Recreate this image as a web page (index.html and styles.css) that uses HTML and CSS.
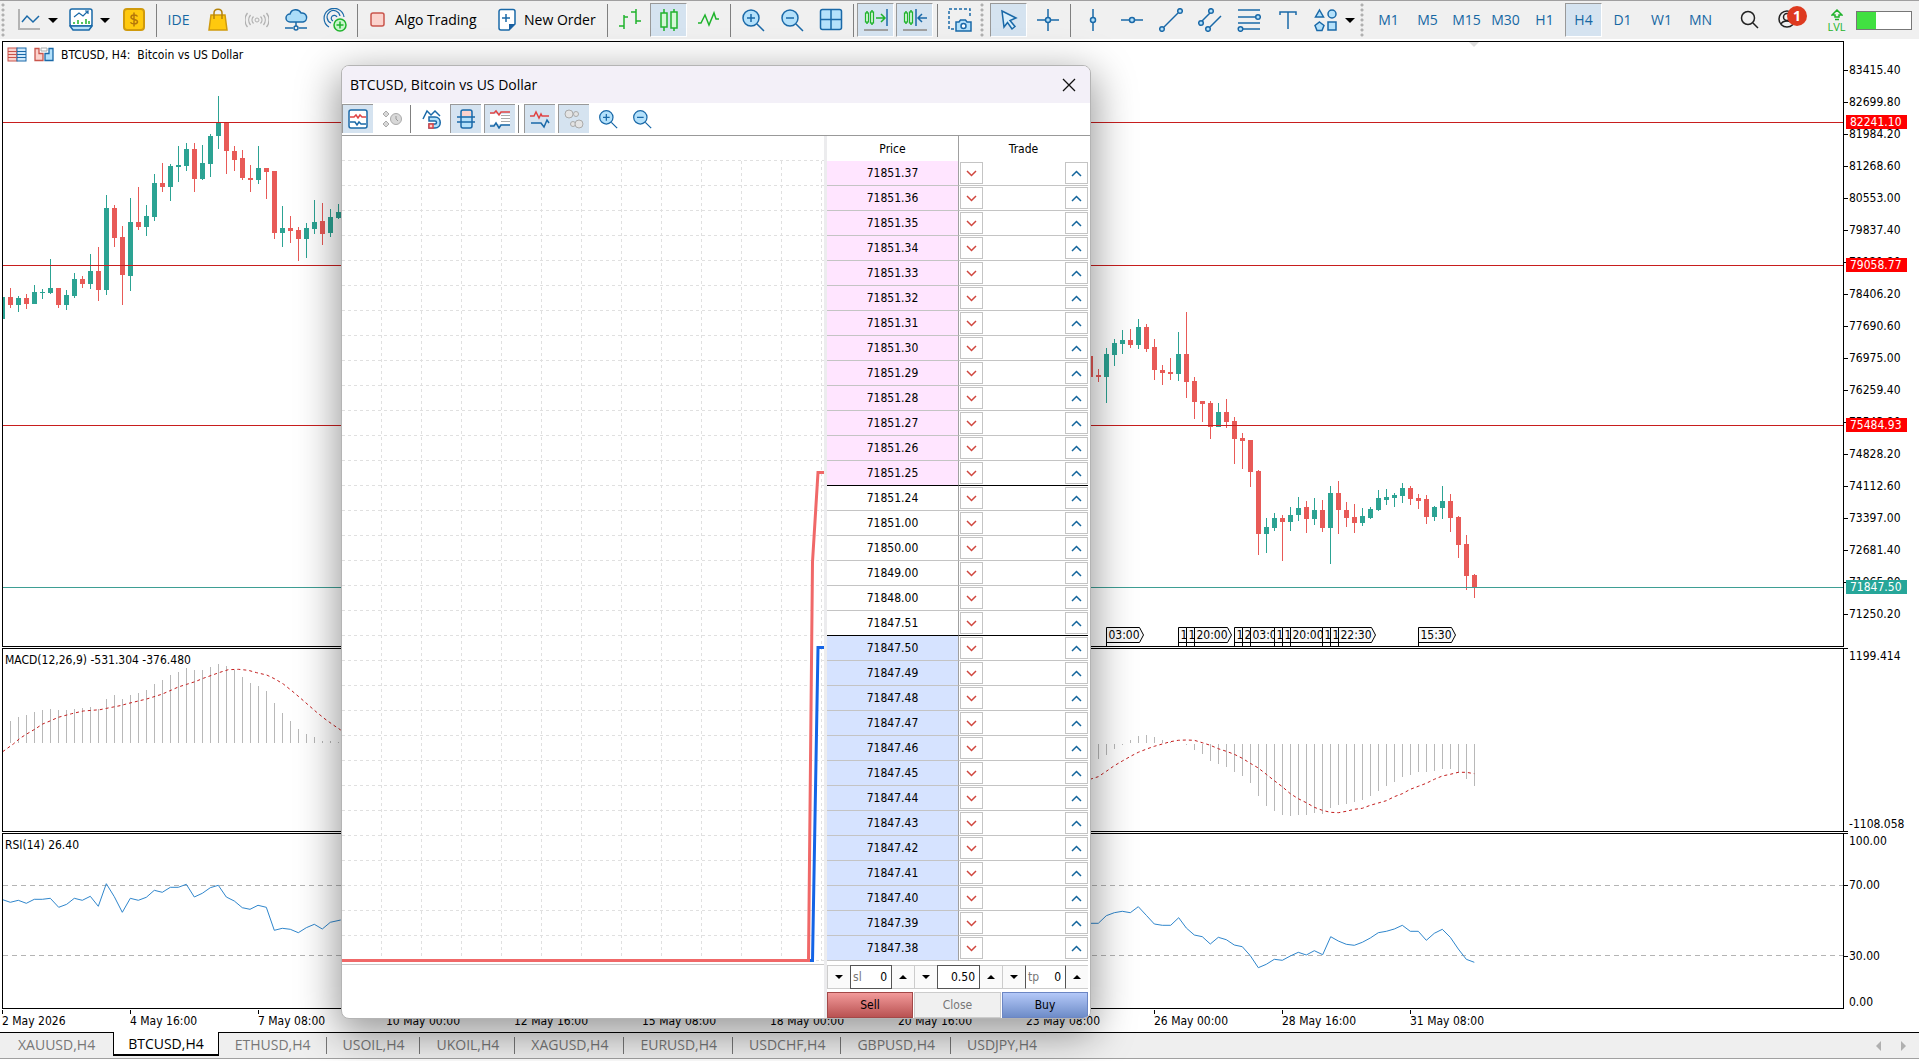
FILE: index.html
```html
<!DOCTYPE html>
<html lang="en">
<head>
<meta charset="utf-8">
<title>BTCUSD, H4</title>
<link rel="stylesheet" href="styles.css">
</head>
<body>
<svg class="sprite" aria-hidden="true">
  <symbol id="i-line" viewBox="0 0 24 24"><path d="M2 1v20h21" stroke="#b4b4b4" stroke-width="2"/><path d="M5 14l5-6 6 6 6-6" class="b"/></symbol>
  <symbol id="i-indicators" viewBox="0 0 24 24"><rect x="1" y="1" width="22" height="17" rx="2" class="b" fill="#fff"/><path d="M5 9l5-4 4 3 5-5h-3m3 0v3" class="b thin"/><path d="M5 16v-2m4 2v-4m4 4v-2m4 2v-5m3 5v-3" class="g"/><path d="M1 18h22l-3 4H4z" fill="#b9e0f8" class="b"/></symbol>
  <symbol id="i-dollar" viewBox="0 0 24 24"><rect x="2" y="1" width="20" height="21" rx="3" fill="#ffc90e" stroke="#d09a0c" stroke-width="2"/><path d="M15.500 8.500c-1-2-6.500-2-6.500.7 0 3 6.500 1.500 6.500 4.500 0 2.800-6 2.800-7 .5M12 4.500v14" stroke="#b5770a" stroke-width="1.500"/></symbol>
  <symbol id="i-bag" viewBox="0 0 24 24"><path d="M5 7h14l2 15H3z" fill="#ffc90e" stroke="#d09a0c" stroke-width="1.500"/><path d="M8 11V5c0-5 8-5 8 0v6" stroke="#b5830a" stroke-width="1.500"/></symbol>
  <symbol id="i-signal" viewBox="0 0 24 24"><circle cx="12" cy="12" r="2" stroke="#b0b0b0"/><path d="M8.500 8.500a5 5 0 0 0 0 7M15.500 8.500a5 5 0 0 1 0 7M5.500 7a8 8 0 0 0 0 10M18.500 7a8 8 0 0 1 0 10M2.500 5a11 11 0 0 0 0 14M21.500 5a11 11 0 0 1 0 14" stroke="#b0b0b0" stroke-width="1.300"/></symbol>
  <symbol id="i-cloud" viewBox="0 0 24 24"><path d="M6 14a4 4 0 0 1 0-8 6 6 0 0 1 11-1 4.500 4.500 0 0 1 2 9z" fill="#aadcf8" class="b"/><path d="M12 14v4M1 20h8m6 0h8" class="b"/><circle cx="12" cy="20" r="2" class="b"/></symbol>
  <symbol id="i-vps" viewBox="0 0 24 24"><path d="M6 19A10 10 0 1 1 21 9M8 15a6.500 6.500 0 1 1 9-7M10 13a3 3 0 1 1 4-4" class="b thin"/><circle cx="17" cy="17" r="6" fill="#c8f5cc" class="g"/><path d="M17 13.500v7M13.500 17h7" class="g"/></symbol>
  <symbol id="i-stop" viewBox="0 0 24 24"><rect x="5" y="5" width="13" height="13" rx="2" fill="#fbd3cd" stroke="#c9554c" stroke-width="1.500"/></symbol>
  <symbol id="i-doc" viewBox="0 0 24 24"><path d="M6 1.500h12a2 2 0 0 1 2 2V16l-6 6H6a2 2 0 0 1-2-2V3.500a2 2 0 0 1 2-2z" fill="#fff" class="b"/><path d="M20 16h-6v6z" fill="#1a5fa0"/><path d="M11 6v8M7 10h8" class="b"/></symbol>
  <symbol id="i-bars" viewBox="0 0 24 24"><path d="M1 18h5M6 7v14M6 9h4M13 4h5M18 1v15M18 13h5" class="g"/></symbol>
  <symbol id="i-candles" viewBox="0 0 24 24"><path d="M7 1v22M17 1v22" class="g"/><rect x="4" y="5" width="6" height="14" fill="#d4f7d6" class="g"/><rect x="14" y="4" width="6" height="16" fill="#d4f7d6" class="g"/></symbol>
  <symbol id="i-zigzag" viewBox="0 0 24 24"><path d="M2 15h3l4-8 4 10 5-12 2 6h3" class="g"/></symbol>
  <symbol id="i-zoomin" viewBox="0 0 24 24"><circle cx="10" cy="10" r="8" fill="#b4e1fb" class="b"/><path d="M16 16l7 7M10 6v8M6 10h8" class="b"/></symbol>
  <symbol id="i-zoomout" viewBox="0 0 24 24"><circle cx="10" cy="10" r="8" fill="#b4e1fb" class="b"/><path d="M16 16l7 7M6 10h8" class="b"/></symbol>
  <symbol id="i-grid" viewBox="0 0 24 24"><rect x="1.500" y="1.500" width="21" height="20" rx="2" fill="#b4e1fb" class="b"/><path d="M12 2v20M2 11.500h20" class="b"/></symbol>
  <symbol id="i-autoscroll" viewBox="0 0 24 24"><path d="M3 3v13M8 2v15" class="g"/><rect x="1.500" y="5" width="3" height="9" fill="#d4f7d6" class="g thin"/><rect x="6.500" y="4" width="3" height="11" fill="#d4f7d6" class="g thin"/><path d="M12 10h8m-3-4l4 4-4 4" class="g"/><path d="M23 1v17" class="b"/><path d="M0 22h24" stroke="#a0a0a0" stroke-width="2"/></symbol>
  <symbol id="i-shift" viewBox="0 0 24 24"><path d="M3 3v13M8 2v15" class="g"/><rect x="1.500" y="5" width="3" height="9" fill="#d4f7d6" class="g thin"/><rect x="6.500" y="4" width="3" height="11" fill="#d4f7d6" class="g thin"/><path d="M13 1v17M24 10h-8m3-4l-4 4 4 4" class="b"/><path d="M0 22h24" stroke="#a0a0a0" stroke-width="2"/></symbol>
  <symbol id="i-camera" viewBox="0 0 24 24"><path d="M6 21H1V1h21v8" class="b" stroke-dasharray="3 2"/><path d="M8 14h3l1.500-2h5l1.500 2h4v9H8z" fill="#b4e1fb" class="b"/><circle cx="15.500" cy="18" r="2.500" fill="#fff" class="b"/></symbol>
  <symbol id="i-cursor" viewBox="0 0 24 24"><path d="M5 3l14 7-6 2.500 5 6-3 2.500-4.500-6.500L7 19z" fill="#d9effc" class="b"/></symbol>
  <symbol id="i-cross" viewBox="0 0 24 24"><path d="M12 1v8m0 6v8M1 12h8m6 0h8" class="b"/><circle cx="12" cy="12" r="2.500" fill="#b4e1fb" class="b"/></symbol>
  <symbol id="i-vline" viewBox="0 0 24 24"><path d="M12 1v8m0 6v8" class="b"/><circle cx="12" cy="12" r="2.500" fill="#b4e1fb" class="b"/></symbol>
  <symbol id="i-hline" viewBox="0 0 24 24"><path d="M1 12h8m6 0h8" class="b"/><circle cx="12" cy="12" r="2.500" fill="#b4e1fb" class="b"/></symbol>
  <symbol id="i-trend" viewBox="0 0 24 24"><path d="M5 19L19 5" class="b"/><circle cx="3" cy="21" r="2.300" fill="#b4e1fb" class="b"/><circle cx="21" cy="3" r="2.300" fill="#b4e1fb" class="b"/></symbol>
  <symbol id="i-channel" viewBox="0 0 24 24"><path d="M4 13l8-8M12 19L23 8" class="b"/><circle cx="3" cy="15" r="2.300" fill="#b4e1fb" class="b"/><circle cx="13" cy="3" r="2.300" fill="#b4e1fb" class="b"/><circle cx="10" cy="21" r="2.300" fill="#b4e1fb" class="b"/></symbol>
  <symbol id="i-fib" viewBox="0 0 24 24"><path d="M1 2h22M1 9h17M1 15h22M6 21h17" class="b"/><circle cx="21" cy="9" r="2.300" fill="#b4e1fb" class="b"/><circle cx="3.500" cy="21" r="2.300" fill="#b4e1fb" class="b"/></symbol>
  <symbol id="i-text" viewBox="0 0 24 24"><path d="M4 7V4h16v3M12 4v17" class="b"/></symbol>
  <symbol id="i-shapes" viewBox="0 0 24 24"><path d="M5.500 2l4 7h-8zM5.500 14l4.500 3.500-2 5H3L1 17.500z" fill="#b4e1fb" class="b"/><circle cx="18" cy="6" r="4" fill="#b4e1fb" class="b"/><rect x="14" y="14" width="8" height="8" fill="#b4e1fb" class="b"/></symbol>
  <symbol id="i-search" viewBox="0 0 24 24"><circle cx="11" cy="10" r="6.500" stroke="#222" stroke-width="1.500"/><path d="M16 15l5 5" stroke="#222" stroke-width="1.500"/></symbol>
  <symbol id="i-user" viewBox="0 0 24 24"><g stroke="#222" stroke-width="1.500"><circle cx="11" cy="11" r="8"/><circle cx="11" cy="9" r="3.500"/><path d="M5 16c2-4 10-4 12 0"/></g></symbol>
  <symbol id="i-level" viewBox="6 0 12 12"><path d="M12 1l5 5h-3v2h-4V6H7zM10 10.500h4" class="g"/></symbol>
  <symbol id="i-table" viewBox="0 0 20 16"><rect x="1" y="1" width="9" height="13" fill="#fbd3cd" stroke="#c9554c"/><rect x="10" y="1" width="9" height="13" fill="#cfe9fb" stroke="#1a69a8"/><path d="M1 4.500h9M1 7.500h9M1 10.500h9" stroke="#c9554c"/><path d="M10 4.500h9M10 7.500h9M10 10.500h9" stroke="#1a69a8"/></symbol>
  <symbol id="i-depth" viewBox="0 0 20 16"><path d="M1 1.500h4v5h4v7H1z" fill="#fbd3cd" stroke="#c9554c" stroke-width="1.300"/><path d="M19 1.500h-4v5h-4v7h8z" fill="#b4e1fb" stroke="#1a69a8" stroke-width="1.300"/><path d="M7 1h6v3H7z" fill="#fff" stroke="#aaa"/></symbol>
  <symbol id="d-chart" viewBox="0 0 20 20"><rect x="1" y="1" width="18" height="18" rx="2" fill="#fff" class="b"/><path d="M2 8h4l2-2 2 3 2-3 2 2h4" class="r"/><path d="M2 13h5l2 3 2-3 2 2h5" class="b"/></symbol>
  <symbol id="d-history" viewBox="0 0 20 20"><g fill="#d8d8d8" stroke="#aaa"><path d="M4 2l3 3-3 3-3-3zM4 12l3 3-3 3-3-3z"/><circle cx="14" cy="10" r="5.500"/></g><path d="M14 7v3l2 2" stroke="#999"/></symbol>
  <symbol id="d-magnet" viewBox="0 0 20 20"><path d="M1 10l4-8 4 4 4-4 5 5" class="b"/><path d="M7 8h6c7 0 7 11 0 11H7v-4h6c2 0 2-3 0-3H7z" fill="#b4e1fb" class="b"/><path d="M7 15h4v4H7z" fill="#fbd3cd" class="r"/></symbol>
  <symbol id="d-spread" viewBox="0 0 20 20"><rect x="5" y="1" width="11" height="18" rx="2" fill="#b4e1fb" class="b"/><path d="M6 2h9v5H6z" fill="#fbd3cd"/><path d="M1 8h18M1 13h18" class="b"/></symbol>
  <symbol id="d-volume" viewBox="0 0 20 20"><path d="M0 5h20v10H0z" fill="#fff"/><path d="M0 4h4l2-2 3 4 2-3h9" class="r"/><path d="M0 17h4l2-3 3 5 2-3h9" class="b"/><path d="M11 6.500h9M11 9.500h9M11 12.500h9" stroke="#aaa"/></symbol>
  <symbol id="d-ticks" viewBox="0 0 20 20"><path d="M0 7h4l2-4 3 6 2-4 1 2h7" class="r"/><path d="M1 14h10l3 4 3-7 2 3" class="b"/></symbol>
  <symbol id="d-deals" viewBox="0 0 20 20"><g stroke="#aaa" fill="#e4e4e4"><circle cx="5" cy="5" r="4"/><circle cx="12" cy="5" r="2.500"/><circle cx="9" cy="15" r="2.500"/><circle cx="15" cy="15" r="4"/></g></symbol>
</svg>

<header class="toolbar" role="toolbar" aria-label="Standard">
  <span class="grip"></span>
  <button class="tool drop" aria-label="Line studies"><svg><use href="#i-line"/></svg><i></i></button>
  <button class="tool drop" aria-label="Indicators"><svg><use href="#i-indicators"/></svg><i></i></button>
  <button class="tool" aria-label="Quotes"><svg><use href="#i-dollar"/></svg></button>
  <span class="sep"></span>
  <button class="tool text">IDE</button>
  <button class="tool" aria-label="Market"><svg><use href="#i-bag"/></svg></button>
  <button class="tool" aria-label="Signals"><svg><use href="#i-signal"/></svg></button>
  <button class="tool" aria-label="Cloud"><svg><use href="#i-cloud"/></svg></button>
  <button class="tool" aria-label="Hosting"><svg><use href="#i-vps"/></svg></button>
  <span class="sep"></span>
  <button class="tool wide algo"><svg><use href="#i-stop"/></svg>Algo Trading</button>
  <button class="tool wide"><svg><use href="#i-doc"/></svg>New Order</button>
  <span class="sep"></span>
  <button class="tool" aria-label="Bar chart"><svg><use href="#i-bars"/></svg></button>
  <button class="tool on" aria-label="Candlesticks"><svg><use href="#i-candles"/></svg></button>
  <button class="tool" aria-label="Line chart"><svg><use href="#i-zigzag"/></svg></button>
  <span class="sep"></span>
  <button class="tool" aria-label="Zoom in"><svg><use href="#i-zoomin"/></svg></button>
  <button class="tool" aria-label="Zoom out"><svg><use href="#i-zoomout"/></svg></button>
  <button class="tool" aria-label="Tile windows"><svg><use href="#i-grid"/></svg></button>
  <span class="sep"></span>
  <button class="tool on" aria-label="Auto scroll"><svg><use href="#i-autoscroll"/></svg></button>
  <button class="tool on" aria-label="Chart shift"><svg><use href="#i-shift"/></svg></button>
  <span class="sep"></span>
  <button class="tool" aria-label="Screenshot"><svg><use href="#i-camera"/></svg></button>
  <span class="grip"></span>
  <button class="tool on" aria-label="Cursor"><svg><use href="#i-cursor"/></svg></button>
  <button class="tool" aria-label="Crosshair"><svg><use href="#i-cross"/></svg></button>
  <span class="sep"></span>
  <button class="tool" aria-label="Vertical line"><svg><use href="#i-vline"/></svg></button>
  <button class="tool" aria-label="Horizontal line"><svg><use href="#i-hline"/></svg></button>
  <button class="tool" aria-label="Trendline"><svg><use href="#i-trend"/></svg></button>
  <button class="tool" aria-label="Channel"><svg><use href="#i-channel"/></svg></button>
  <button class="tool" aria-label="Fibonacci"><svg><use href="#i-fib"/></svg></button>
  <button class="tool" aria-label="Text"><svg><use href="#i-text"/></svg></button>
  <button class="tool drop" aria-label="Shapes"><svg><use href="#i-shapes"/></svg><i></i></button>
  <span class="grip"></span>
  <button class="tool text">M1</button>
  <button class="tool text">M5</button>
  <button class="tool text">M15</button>
  <button class="tool text">M30</button>
  <button class="tool text">H1</button>
  <button class="tool text on">H4</button>
  <button class="tool text">D1</button>
  <button class="tool text">W1</button>
  <button class="tool text">MN</button>
  <div class="status">
    <button class="tool" aria-label="Search"><svg><use href="#i-search"/></svg></button>
    <button class="tool" aria-label="Account"><svg><use href="#i-user"/></svg><b class="badge">1</b></button>
    <button class="tool level"><svg><use href="#i-level"/></svg><span>LVL</span></button>
    <span class="battery"><span></span></span>
  </div>
</header>

<main class="workspace">
  <section class="panes">
    <div class="plot">
      <svg id="price"></svg>
      <h1 class="caption"><svg><use href="#i-table"/></svg><svg><use href="#i-depth"/></svg><span>BTCUSD, H4:&nbsp; Bitcoin vs US Dollar</span></h1>
    </div>
    <div class="axis prices">
      <span>83415.40</span><span>82699.80</span><span>81984.20</span><span>81268.60</span><span>80553.00</span><span>79837.40</span><span>79121.80</span><span>78406.20</span><span>77690.60</span><span>76975.00</span><span>76259.40</span><span>75543.80</span><span>74828.20</span><span>74112.60</span><span>73397.00</span><span>72681.40</span><span>71965.80</span><span>71250.20</span>
      <b class="tag r1">82241.10</b><b class="tag r2">79058.77</b><b class="tag r3">75484.93</b><b class="tag bid">71847.50</b>
    </div>
    <div class="plot"><svg id="macd"></svg><h2 class="caption">MACD(12,26,9) -531.304 -376.480</h2></div>
    <div class="axis ends"><span>1199.414</span><span>-1108.058</span></div>
    <div class="plot"><svg id="rsi"></svg><h2 class="caption">RSI(14) 26.40</h2></div>
    <div class="axis levels"><span>100.00</span><span class="tick">70.00</span><span class="tick">30.00</span><span>0.00</span></div>
    <div class="dates">
      <span>2 May 2026</span><span>4 May 16:00</span><span>7 May 08:00</span><span>10 May 00:00</span><span>12 May 16:00</span><span>15 May 08:00</span><span>18 May 00:00</span><span>20 May 16:00</span><span>23 May 08:00</span><span>26 May 00:00</span><span>28 May 16:00</span><span>31 May 08:00</span>
    </div>
  </section>
  <nav class="tabs" aria-label="Charts">
    <a href="#">XAUUSD,H4</a><a href="#" class="current">BTCUSD,H4</a><a href="#">ETHUSD,H4</a><a href="#">USOIL,H4</a><a href="#">UKOIL,H4</a><a href="#">XAGUSD,H4</a><a href="#">EURUSD,H4</a><a href="#">USDCHF,H4</a><a href="#">GBPUSD,H4</a><a href="#" class="last">USDJPY,H4</a>
    <span class="scroll"><button class="prev" aria-label="Previous"></button><button class="next" aria-label="Next"></button></span>
  </nav>
</main>

<section class="dialog" role="dialog" aria-label="Depth of market">
  <header class="title"><h2>BTCUSD, Bitcoin vs US Dollar</h2><button aria-label="Close window"><svg viewBox="0 0 14 14"><path d="M1 1l12 12M13 1L1 13" stroke="#111" stroke-width="1.300"/></svg></button></header>
  <div class="dom-tools">
    <button class="on" aria-label="Chart"><svg><use href="#d-chart"/></svg></button>
    <button aria-label="History"><svg><use href="#d-history"/></svg></button>
    <span class="sep"></span>
    <button aria-label="Magnet"><svg><use href="#d-magnet"/></svg></button>
    <button class="on" aria-label="Spread"><svg><use href="#d-spread"/></svg></button>
    <button class="on" aria-label="Volumes"><svg><use href="#d-volume"/></svg></button>
    <span class="sep"></span>
    <button class="on" aria-label="Ticks"><svg><use href="#d-ticks"/></svg></button>
    <button class="on" aria-label="Deals"><svg><use href="#d-deals"/></svg></button>
    <button aria-label="Zoom in"><svg><use href="#i-zoomin"/></svg></button>
    <button aria-label="Zoom out"><svg><use href="#i-zoomout"/></svg></button>
  </div>
  <div class="dom">
    <div class="depth"><svg id="depth"></svg></div>
    <div class="book">
      <table>
        <thead><tr><th class="price">Price</th><th colspan="3">Trade</th></tr></thead>
        <tbody id="ladder"></tbody>
      </table>
      <form class="order">
        <div class="spin"><button type="button" aria-label="Lower stop loss" class="down"></button><label class="field"><span>sl</span><input value="0"></label><button type="button" aria-label="Raise stop loss" class="up"></button></div>
        <div class="spin"><button type="button" aria-label="Lower volume" class="down"></button><label class="field"><input value="0.50" aria-label="Volume"></label><button type="button" aria-label="Raise volume" class="up"></button></div>
        <div class="spin"><button type="button" aria-label="Lower take profit" class="down"></button><label class="field side"><span>tp</span><input value="0"></label><button type="button" aria-label="Raise take profit" class="up"></button></div>
        <button type="button" class="deal sell">Sell</button>
        <button type="button" class="deal close">Close</button>
        <button type="button" class="deal buy">Buy</button>
      </form>
    </div>
  </div>
</section>
<script src="chart.js"></script>
</body>
</html>
```
FILE: styles.css
```css
* { box-sizing: border-box; }
body {
  margin: 0;
  height: 100vh;
  display: flex;
  flex-direction: column;
  overflow: hidden;
  background: #fff;
  color: #000;
  font: 12px/14px "DejaVu Sans Condensed", "DejaVu Sans", sans-serif;
}
button, input { font: inherit; color: inherit; padding: 0; margin: 0; border: 0; background: none; }
h1, h2 { margin: 0; font: inherit; }
svg { fill: none; }
.sprite { position: absolute; width: 0; height: 0; }
.b { stroke: #1a69a8; stroke-width: 1.5; }
.g { stroke: #1fb32c; stroke-width: 1.5; }
.r { stroke: #e04444; stroke-width: 1.5; }
.thin { stroke-width: 1.2; }

/* main toolbar */
.toolbar {
  flex: none;
  height: 39px;
  display: flex;
  align-items: center;
  padding-right: 7px;
  background: #f0f0f0;
  border-top: 1px solid #a09fa0;
  font: 14px/20px "Open Sans", "Noto Sans", sans-serif;
}
.toolbar svg { flex: none; width: 24px; height: 24px; }
.grip { flex: none; width: 10px; height: 34px; background: radial-gradient(circle at 3px 2px, #b0b0b0 1px, transparent 2px) 0 0 / 10px 5px; }
.sep { flex: none; width: 1px; height: 33px; margin: 0 2px 0 3px; background: #808080; }
.tool {
  flex: none;
  position: relative;
  width: 37px;
  height: 34px;
  margin: 0 1px;
  display: flex;
  align-items: center;
  justify-content: center;
  border: 1px solid transparent;
}
.tool.on { background: #d5e3f0; border-color: #999 #fff #fff #999; }
.tool.text { color: #1667a3; }
.tool.drop { width: 50px; justify-content: space-between; padding: 0 2px 0 5px; }
.tool.drop i { border: 5px solid transparent; border-top-color: #000; border-bottom: 0; }
.tool.wide { width: 113px; justify-content: flex-start; padding-left: 4px; gap: 5px; white-space: nowrap; }
.tool.algo { width: 127px; }
.status { margin-left: auto; display: flex; align-items: center; }
.badge {
  position: absolute;
  top: 2px;
  right: -2px;
  width: 20px;
  border-radius: 10px;
  background: #de3a20;
  color: #fff;
  text-align: center;
}
.level { flex-direction: column; gap: 1px; color: #1fb32c; font-size: 11px; line-height: 10px; margin-left: 11px; }
.toolbar .level svg { width: 12px; height: 12px; }
.battery { width: 56px; height: 19px; border: 1px solid #777; background: #fff; }
.battery span { display: block; width: 35%; height: 100%; background: #41e041; }

/* chart panes */
.workspace { flex: 1; display: flex; flex-direction: column; min-height: 0; padding-top: 2px; }
.panes {
  flex: 1;
  min-height: 0;
  display: grid;
  grid-template: minmax(0, 606fr) minmax(0, 184fr) minmax(0, 176fr) 22px / minmax(0, 1fr) 75px;
  row-gap: 1px;
  padding-left: 2px;
}
.plot { position: relative; border: 1px solid #000; overflow: hidden; }
.plot > svg { display: block; width: 100%; height: 100%; }
.caption { position: absolute; top: 4px; left: 2px; display: flex; align-items: center; background: #fff; }
h1.caption { top: 5px; left: 4px; gap: 7px; }
.caption svg { width: 20px; height: 16px; }
.axis { position: relative; padding-left: 5px; overflow: hidden; }
.axis span { display: block; position: relative; }
.prices { padding-top: 13px; }
.prices span { height: 32px; line-height: 32px; }
.prices span::before, .tick::before { content: ""; position: absolute; left: -5px; top: 50%; width: 4px; border-top: 1px solid #000; }
.tag { position: absolute; left: 2px; width: 61px; height: 14px; padding-left: 4px; color: #fff; font-weight: normal; background: #f00; }
.r1 { top: 74px; }
.r2 { top: 217px; }
.r3 { top: 377px; }
.bid { top: 539px; background: #26a699; }
.ends { display: flex; flex-direction: column; justify-content: space-between; }
.ends span:first-child::before, .ends span:last-child::after, .levels span:first-child::before {
  content: "";
  display: block;
  width: 4px;
  margin-left: -5px;
  border-top: 1px solid #000;
}
.levels { display: grid; grid-template-rows: 45fr 70fr 46fr 14px; align-items: start; }
.dates { grid-column: 1 / -1; display: flex; overflow: hidden; }
.dates span { flex: none; width: 128px; padding-top: 4px; background: linear-gradient(#000, #000) 0 0 / 1px 4px no-repeat; white-space: nowrap; }

/* chart drawing */
.up { stroke: #2ca393; }
.dn { stroke: #e85a57; }
.body { stroke-width: 5; }
.level-line { stroke: #c81e1e; }
.bid-line { stroke: #3e9e94; }
.bars { stroke: #b8b8b8; }
.signal { stroke: #c41e1e; stroke-dasharray: 3 3; stroke-width: 1; }
.rsi { stroke: #2f86cc; }
.guide { stroke: #b4b4b4; stroke-dasharray: 5 4; }
.flag { fill: #f8f8f8; stroke: #000; }
.flag-text { fill: #000; }
.mesh { stroke: #e0e0e0; stroke-dasharray: 3 3; }
.asks { stroke: #f06868; stroke-width: 3; }
.bids { stroke: #1464e6; stroke-width: 3; }

/* chart tabs */
.tabs {
  flex: none;
  display: flex;
  height: 27px;
  margin-bottom: 2px;
  border-top: 1px solid #000;
  border-bottom: 1px solid #a0a0a0;
  background: #efefef;
  font: 14px/24px "Open Sans", "Noto Sans", sans-serif;
}
.tabs a { padding: 0 16px; color: #777; text-decoration: none; background: linear-gradient(#777, #777) 100% 4px / 1px 17px no-repeat; }
.tabs a:first-child { padding: 0 18px; background: none; }
.tabs a.last { background: none; }
.tabs a.current { height: 24px; margin-top: -1px; padding: 0 14px; border: solid #000; border-width: 0 1px 2px; background: #fff; color: #000; }
.scroll { margin-left: auto; display: flex; align-items: center; gap: 20px; padding-right: 13px; }
.prev, .next { border: 5px solid transparent; }
.prev { border-left: 0; border-right-color: #b0b0b0; }
.next { border-right: 0; border-left-color: #b0b0b0; }

/* depth of market window */
.dialog {
  position: absolute;
  left: 341px;
  top: 65px;
  width: 750px;
  border: 1px solid #b4b4b4;
  border-radius: 8px;
  overflow: hidden;
  background: #fff;
  box-shadow: 0 12px 40px 4px rgba(0, 0, 0, .4);
}
.title { display: flex; align-items: center; justify-content: space-between; height: 37px; padding: 0 14px 0 8px; background: #f3f0f8; font: 14px/20px "Open Sans", "Noto Sans", sans-serif; }
.title svg { display: block; width: 14px; height: 14px; }
.dom-tools { display: flex; align-items: center; gap: 3px; height: 33px; border-bottom: 1px solid #999; padding-bottom: 1px; }
.dom-tools button { display: flex; align-items: center; justify-content: center; width: 31px; height: 29px; border: solid transparent; border-width: 1px 0 0 1px; }
.dom-tools button.on { background: #d5e3f0; border-color: #999; }
.dom-tools svg { width: 20px; height: 20px; }
.dom-tools .sep { height: 28px; margin: 0 2px 0 0; }
.dom { display: flex; }
.depth { flex: 1; border-right: 3px solid #ececee; }
.depth svg { display: block; width: 100%; height: 829px; border-bottom: 1px solid #c8c8c8; }
.book { width: 263px; padding-right: 2px; background: #fff; }
table { width: 100%; border-collapse: separate; border-spacing: 0; table-layout: fixed; }
th, td { height: 25px; padding: 0; font-weight: normal; text-align: center; }
th.price { width: 132px; }
.price { border-right: 1px solid #a0a0a0; }
td { border-bottom: 1px solid #c4c4c4; }
.ask .price { background: #ffe5ff; }
.bid-row .price { background: #d6e3ff; }
.edge td { border-bottom-color: #000; }
td.act { text-align: left; padding-left: 1px; }
td.act:last-child { text-align: right; padding: 0; }
td button { display: inline-flex; align-items: center; justify-content: center; vertical-align: middle; width: 23px; height: 22px; border: 1px solid #c4c4c4; background: #fff; }
td svg { width: 11px; height: 7px; }
.sellmark { stroke: #d0463e; stroke-width: 1.5; }
.buymark { stroke: #14659c; stroke-width: 1.5; }
.order { display: grid; grid-template-columns: 87px 88px 86px; row-gap: 3px; padding: 4px 0 0; }
.spin { display: flex; height: 24px; border: solid #ccc; border-width: 1px 0 1px 1px; background: #fafafa; }
.spin button { flex: none; width: 22px; display: flex; align-items: center; justify-content: center; }
.spin button::before { content: ""; border: 4px solid transparent; }
.spin .down::before { border-top-color: #000; border-bottom: 0; }
.spin .up::before { border-bottom-color: #000; border-top: 0; }
.field { flex: 1; display: flex; align-items: center; margin: -1px 0; padding: 0 4px 0 2px; border: 1px solid #555; background: #fff; }
.field.side { border-color: #ccc #555; }
.field span { color: #777; }
.field input { flex: 1; min-width: 0; width: 20px; text-align: right; outline: 0; }
.deal { height: 26px; margin-right: 1px; border: 1px solid #ccc; background: #f0f0f0; }
.close { color: #777; }
.sell { border-color: #a34848; background: linear-gradient(#f29a9a, #b95252); }
.buy { margin: 0; border-color: #6c86c4; background: linear-gradient(#b4c8f8, #6e8cc8); }
```
FILE: chart.js
```js
const NS = 'http://www.w3.org/2000/svg';
function add(parent, name, attrs, text) {
  const el = document.createElementNS(NS, name);
  for (const key in attrs) el.setAttribute(key, attrs[key]);
  if (text) el.textContent = text;
  parent.appendChild(el);
  return el;
}
const byId = id => document.getElementById(id);

// Samples are stored at three units per pixel; bars stand eight pixels apart.
const STEP = 8;
const px = v => Math.round(v / 3);
const barX = i => i * STEP - 0.5;

// high, low, body top, body bottom, direction (1 = up)
const early = [
  [651,717,651,717,1],[624,684,651,675,0],[648,696,654,675,1],[642,687,654,672,0],[615,672,636,672,1],[627,657,635,638,1],
  [537,642,624,639,1],[624,684,624,675,0],[630,690,645,675,1],[579,654,597,648,1],[588,624,597,612,0],[522,627,573,612,1],
  [501,663,573,630,0],[345,645,384,630,1],[375,501,384,474,0],[438,675,471,585,0],[354,633,426,588,1],[321,450,426,441,0],
  [375,468,408,441,1],[282,423,309,411,1],[249,336,309,321,0],[252,363,258,321,1],[198,306,255,261,1],[189,273,207,258,1],
  [189,336,207,297,0],[195,300,249,297,1],[162,291,168,252,1],[48,207,127,168,1],[127,282,127,213,0],[198,273,213,240,0],
  [210,300,234,294,0],[255,336,294,300,0],[198,312,264,300,1],[264,357,264,276,0],[273,477,273,459,0],[378,501,444,459,1],
  [408,489,444,453,0],[441,543,450,477,0],[429,534,444,477,1],[360,462,426,447,1],[369,495,423,462,0],[387,471,411,459,1],
  [372,417,396,414,1]];
const late = [
  [165,294,167,231,0],[207,246,225,231,0],[144,309,162,231,1],[117,198,129,165,1],[90,162,120,132,1],[87,144,120,135,0],
  [57,147,81,135,1],[72,156,81,147,0],[117,240,141,210,0],[195,255,210,219,0],[174,240,216,222,0],[96,243,162,222,1],
  [36,294,162,246,0],[231,357,243,306,0],[303,366,303,312,0],[303,417,309,381,0],[309,381,336,381,1],[297,384,336,366,0],
  [351,492,363,417,0],[399,507,414,423,0],[420,561,420,516,0],[510,765,513,702,0],[654,759,681,702,1],[639,693,654,684,1],
  [645,783,654,666,0],[621,693,645,666,1],[591,663,624,645,1],[603,699,621,657,0],[594,675,630,657,1],[600,696,630,684,0],
  [558,792,579,684,1],[543,702,579,630,0],[606,681,630,654,0],[612,699,651,669,0],[624,678,648,669,1],[621,657,627,654,1],
  [570,633,594,630,1],[567,615,591,600,1],[579,621,585,594,1],[549,609,564,588,1],[558,615,564,597,0],[582,627,594,603,0],
  [585,672,597,651,0],[618,663,621,651,1],[558,657,603,624,1],[582,696,603,654,0],[648,774,651,735,0],[705,870,732,828,0],
  [822,894,825,864,0]];

function candles(svg, list, first, offset) {
  list.forEach(([hi, lo, top, bottom, up], n) => {
    const x = barX(first + n), cls = up ? 'up' : 'dn';
    add(svg, 'path', { class: cls, d: `M${x} ${offset + px(hi)}V${offset + px(lo)}` });
    add(svg, 'path', { class: cls + ' body', d: `M${x} ${offset + px(top)}V${offset + px(bottom)}` });
  });
}
const rule = (svg, y, cls) => add(svg, 'line', { x1: 0, x2: '100%', y1: y, y2: y, class: cls });

const price = byId('price');
candles(price, early, 0, 38);
candles(price, late, 136, 258);
[80.5, 223.5, 383.5].forEach(y => rule(price, y, 'level-line'));
rule(price, 545.5, 'bid-line');
add(price, 'path', { d: 'M1466 0h10l-5 5z', fill: '#ddd' });
[[138,'03:00'],[147,'1'],[148,'1'],[149,'20:00'],[154,'1'],[155,'2'],[156,'03:00'],[159,'1'],[160,'1'],[161,'20:00'],[165,'1'],[166,'1'],[167,'22:30'],[177,'15:30']].forEach(([i, label]) => {
  const x = barX(i);
  add(price, 'path', { class: 'flag', d: `M${x} 604V585.500h33l4 7.500-4 7.500h-33` });
  add(price, 'text', { class: 'flag-text', x: x + 2, y: 597 }, label);
});

const macd = byId('macd');
const zero = 94;
[243,231,225,215,210,207,210,210,207,204,201,207,177,165,177,165,159,150,132,120,105,96,84,90,90,81,72,78,90,111,129,138,153,189,219,243,267,282,291,303,303,306]
  .forEach((v, n) => add(macd, 'path', { class: 'bars', d: `M${barX(n + 1)} ${px(v) - 9}V${zero}` }));
[430,416,404,386,374,360,348,345,351,360,366,369,374,389,402,422,432,440,455,467,488,527,557,572,584,587,584,584,578,581,563,554,551,545,539,527,512,497,485,470,464,455,455,452,446,446,458,476,497]
  .forEach((v, n) => add(macd, 'path', { class: 'bars', d: `M${barX(n + 136)} ${px(v) - 29}V${v < 371 ? zero : zero + 1}` }));

function curve(svg, cls, pts, dx, dy) {
  const d = pts.map(([x, y]) => `${(x / 3 + dx).toFixed(1)} ${(y / 3 + dy).toFixed(1)}`).join('L');
  add(svg, 'path', { class: cls, d: 'M' + d });
}
curve(macd, 'signal', [[8,335],[40,312],[60,295],[80,282],[104,268],[128,252],[150,243],[175,232],[215,221],[250,213],[300,209],[320,205],[360,197],[390,189],[440,177],[485,163],[510,152],[535,141],[560,133],[585,125],[610,115],[635,106],[660,97],[685,89],[715,88],[745,91],[770,98],[800,105],[825,117],[850,132],[875,152],[900,173],[925,195],[950,217],[975,237],[1000,255],[1022,270]], -3, -9);
curve(macd, 'signal', [[15,478],[40,470],[64,454],[88,437],[112,423],[140,407],[160,397],[185,387],[208,379],[232,372],[256,365],[280,361],[304,360],[328,361],[352,368],[376,376],[400,386],[424,394],[448,403],[472,415],[496,430],[520,444],[544,463],[568,482],[592,500],[616,521],[640,536],[664,548],[688,562],[712,571],[736,577],[760,578],[784,574],[808,568],[832,565],[856,556],[880,549],[904,542],[928,530],[952,521],[976,508],[1000,499],[1024,490],[1048,478],[1072,468],[1096,463],[1120,457],[1144,457],[1168,461]], 1082, -29);

const rsi = byId('rsi');
rule(rsi, 51.5, 'guide');
rule(rsi, 121.5, 'guide');
curve(rsi, 'rsi', [[8,779],[31,787],[55,781],[79,790],[103,778],[127,778],[151,775],[176,802],[200,793],[223,775],[247,781],[271,769],[295,799],[319,731],[343,770],[367,817],[391,775],[415,781],[439,772],[463,751],[487,757],[511,742],[535,742],[559,733],[583,771],[607,760],[631,743],[655,736],[679,771],[703,783],[727,803],[750,808],[774,796],[799,802],[823,871],[847,865],[871,868],[895,878],[919,863],[943,853],[967,867],[991,847],[1022,840]], -3, -194);
curve(rsi, 'rsi', [[15,910],[40,910],[64,887],[88,878],[112,874],[136,878],[160,860],[184,886],[208,912],[232,916],[257,916],[281,893],[304,924],[328,945],[352,950],[376,972],[400,952],[424,959],[448,975],[472,980],[496,1007],[520,1043],[544,1033],[568,1018],[592,1021],[616,1008],[640,997],[664,1005],[688,992],[713,1004],[737,950],[760,963],[784,973],[808,976],[832,967],[856,954],[880,938],[904,934],[928,927],[952,916],[976,934],[1000,934],[1024,961],[1048,940],[1072,928],[1096,952],[1120,987],[1144,1018],[1168,1027]], 1082, -214);

const depth = byId('depth');
for (let x = 39.5; x < 482; x += 40) add(depth, 'line', { class: 'mesh', x1: x, x2: x, y1: 25, y2: 825 });
for (let y = 24.5; y < 826; y += 25) rule(depth, y, 'mesh');
add(depth, 'path', { class: 'bids', d: 'M460 824.500h10.500L476 511.500h8' });
add(depth, 'path', { class: 'asks', d: 'M0 824.500h466.500L470.500 426l5.500-89.500h8' });

const asks = [], bids = [];
for (let n = 0; n < 13; n++) {
  asks.push((71851.37 - n / 100).toFixed(2));
  bids.push((71847.50 - n / 100).toFixed(2));
}
const middle = ['71851.24', '71851.00', '71850.00', '71849.00', '71848.00', '71847.51'];
byId('ladder').innerHTML = [...asks, ...middle, ...bids].map((p, n) => {
  const cls = [n < 13 ? 'ask' : n > 18 ? 'bid-row' : '', n === 12 || n === 18 ? 'edge' : ''].join(' ');
  return `<tr class="${cls}"><td class="price">${p}</td>
    <td class="act"><button aria-label="Sell at ${p}"><svg viewBox="0 0 11 7"><path class="sellmark" d="M1 1l4.500 4.500L10 1"/></svg></button></td><td></td>
    <td class="act"><button aria-label="Buy at ${p}"><svg viewBox="0 0 11 7"><path class="buymark" d="M1 6l4.500-4.500L10 6"/></svg></button></td></tr>`;
}).join('');
```
